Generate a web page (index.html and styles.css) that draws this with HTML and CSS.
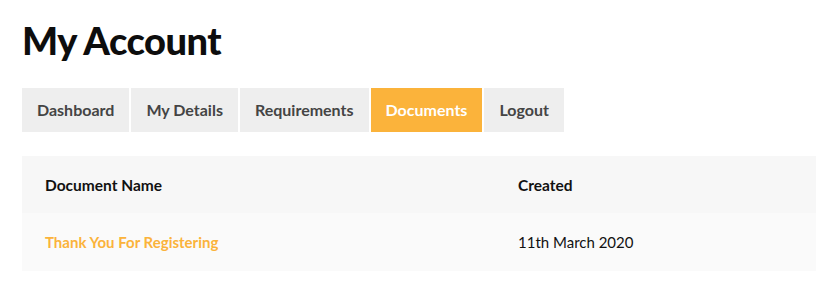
FILE: index.html
```html
<!DOCTYPE html>
<html lang="en">
<head>
  <meta charset="UTF-8">
  <title>My Account</title>
  <link rel="stylesheet" href="styles.css">
</head>
<body>
  <main class="account">
    <h1>My Account</h1>

    <!-- Account Tabs -->
    <nav class="tabs">
      <a href="#" class="tab">Dashboard</a>
      <a href="#" class="tab">My Details</a>
      <a href="#" class="tab">Requirements</a>
      <a href="#" class="tab active">Documents</a>
      <a href="#" class="tab">Logout</a>
    </nav>

    <!-- Documents Table -->
    <table class="docs">
      <thead>
        <tr>
          <th class="col-name">Document Name</th>
          <th>Created</th>
        </tr>
      </thead>
      <tbody>
        <tr>
          <td><a href="#" class="doc-link">Thank You For Registering</a></td>
          <td>11th March 2020</td>
        </tr>
      </tbody>
    </table>
  </main>
</body>
</html>
```

FILE: styles.css
```css
/* General Styles */
* {
  margin: 0;
  padding: 0;
  box-sizing: border-box;
}

body {
  font-family: 'Lato', 'Liberation Sans', sans-serif;
  background: #fff;
  color: #111;
  padding: 18px 21px 0 22px;
}

h1 {
  font-size: 38px;
  font-weight: 900;
  letter-spacing: -0.5px;
  line-height: 44px;
  color: #0d0d0d;
}

/* Tabs */
.tabs {
  display: flex;
  gap: 2px;
  margin-top: 26px;
}

.tab {
  display: block;
  height: 44px;
  line-height: 44px;
  padding: 0 15px;
  background: #eeeeee;
  color: #444;
  font-size: 16px;
  font-weight: 700;
  text-decoration: none;
}

.tab.active {
  background: #fbb33b;
  color: #fff;
}

/* Table */
.docs {
  width: 100%;
  margin-top: 24px;
  border-collapse: collapse;
  font-size: 15px;
}

.docs th,
.docs td {
  text-align: left;
  height: 58px;
  padding: 0 23px;
}

.docs th {
  background: #f7f7f7;
  font-weight: 700;
  font-size: 15.5px;
  height: 57px;
}

.docs td {
  background: #fafafa;
}

.col-name {
  width: 473px;
}

.doc-link {
  color: #fbb33b;
  font-weight: 700;
  text-decoration: none;
}
```
